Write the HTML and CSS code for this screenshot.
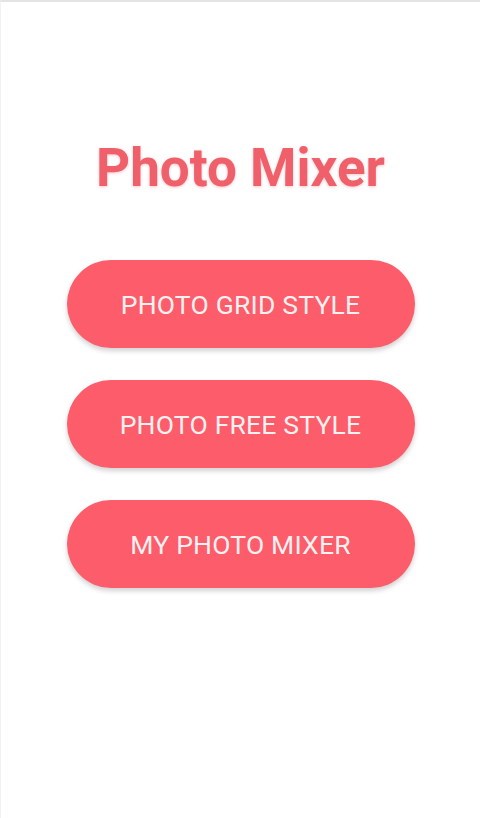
FILE: index.html
```html
<!DOCTYPE html>
<html lang="en">
<head>
    <meta charset="UTF-8" />
    <meta name="viewport" content="width=device-width, initial-scale=1.0" />
    <title>Photo Mixer</title>
    <link rel="stylesheet" href="styles.css">
</head>
<body>

<!-- Pantalla principal -->
<div class="screen">
    <h1 class="title">Photo Mixer</h1>

    <div class="menu">
        <button class="menu-button">PHOTO GRID STYLE</button>
        <button class="menu-button">PHOTO FREE STYLE</button>
        <button class="menu-button">MY PHOTO MIXER</button>
    </div>
</div>

</body>
</html>
```

FILE: styles.css
```css
body {
    margin: 0;
    background-color: #ffffff;
    font-family: Roboto, "Liberation Sans", sans-serif;
}

.screen {
    height: 818px;
    box-sizing: border-box;
    border-top: 2px solid #e4e4e4;
    border-left: 1px solid #f2f2f2;
    padding-top: 140px;
}

.title {
    margin: 0 0 65px 0;
    text-align: center;
    font-size: 53px;
    line-height: 1;
    font-weight: 700;
    color: #f0606b;
    text-shadow: 0 1px 3px rgba(240, 96, 107, 0.35);
}

.menu {
    display: flex;
    flex-direction: column;
    align-items: center;
    gap: 32px;
}

.menu-button {
    width: 348px;
    height: 88px;
    border: none;
    border-radius: 44px;
    background-color: #fd5c6a;
    color: #fdf1f1;
    font-family: Roboto, "Liberation Sans", sans-serif;
    font-size: 26.5px;
    letter-spacing: 0.2px;
    cursor: pointer;
    box-shadow: 0 3px 5px rgba(0, 0, 0, 0.18);
}

/* animacion del boton */
.menu-button:hover {
    background-color: #f04c5b;
}
```
